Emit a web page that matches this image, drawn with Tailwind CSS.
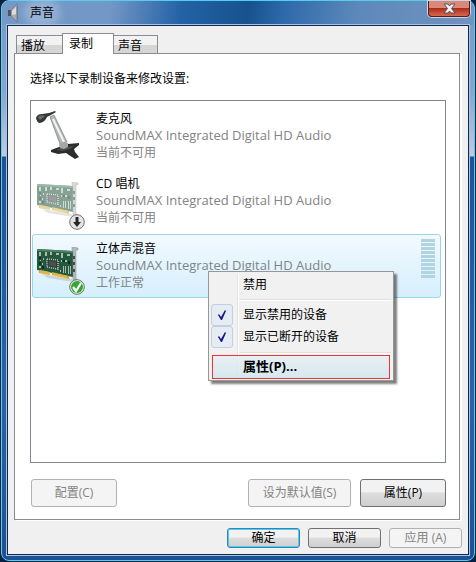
<!DOCTYPE html>
<html lang="zh-CN">
  <head>
    <meta charset="UTF-8" />
    <meta name="viewport" content="width=device-width, initial-scale=1.0" />
    <title>声音</title>
    <script src="https://cdn.jsdelivr.net/npm/@tailwindcss/browser@4"></script>
  </head>
  <body class="h-screen bg-[#06223f] font-['Open_Sans','Noto_Sans_CJK_SC',sans-serif] text-xs text-black">
    <!-- Shared circuit board drawing -->
    <svg class="hidden">
      <symbol id="card" viewBox="0 0 44 38">
        <path d="M6 27 L36 32 L42 31 L37 35 L12 31Z" fill="#ccd3d3" />
        <path d="M1 2 L37 4 V30 L1 23Z" fill="#23573e" />
        <path d="M1 2 L37 4 V6 L1 4Z" fill="#4f8465" />
        <path d="M3 23 L14 25 V28 L3 26Z M16 25 L33 29 V32 L16 28Z" fill="#d6a52c" />
        <path d="M5 23v3M7 23v4M9 24v3M11 24v4M13 25v3M18 26v3M20 26v3M22 27v3M24 27v3M26 28v3M28 28v3M30 29v3" stroke="#f7dc7c" stroke-width=".6" />
        <path d="M11 12 L22 13 V22 L11 20Z" fill="#343d3a" stroke="#b7c7bd" stroke-width="1.500" stroke-dasharray="1 1" />
        <path d="M13 14 L20 15 V20 L13 18Z" fill="#49504e" />
        <g fill="#a9bdb0">
          <path d="M3 5h2v4H3zM9 5h2v4H9zM14 5h2v3h-2zM20 6h3v2h-3zM25 6h2v5h-2zM31 7h3v2h-3zM27 19h1v7h-1zM29 19h1v7h-1zM32 19h1v8h-1zM34 19h1v8h-1z" />
          <path d="M4 13h1v1H4zM6 16h1v2H6zM3 19h2v2H3zM7 11h1v2H7zM25 13h1v2h-1zM29 13h2v2h-2zM24 23h1v2h-1z" />
        </g>
        <path d="M3 10h2v2H3zM3 15h2v3H3zM6 19h2v3H6zM27 13h2v2h-2zM32 14h2v3h-2z" fill="#102d20" />
        <path d="M36 0 L42 1 V3 L40 3 V33 L37 32 V4 L36 3Z" fill="#b5b9bc" stroke="#84898b" stroke-width=".5" />
        <path d="M37 9h2v3h-2zM37 15h2v3h-2zM37 22h2v3h-2z" fill="#424b4d" />
      </symbol>
    </svg>

    <main class="flex h-full flex-col px-px pb-px">
      <div class="flex min-h-0 grow flex-col rounded-lg border border-[#55cdef] bg-[linear-gradient(#7598c6_0,#84a6cf_90px,#bdcce0_155px,#1c549b_156px,#2863a8_400px,#1b5295_100%)] px-[5px] pb-[5px]">
        <!-- Title bar -->
        <header class="-mx-[5px] flex h-6 shrink-0 items-start justify-between rounded-t-lg bg-[linear-gradient(100deg,#7598c6_0%,#7397c6_23%,#2462a6_38%,#17528f_52%,#2f6aab_60%,#5c89ba_75%,#7393bf_100%)] pr-1 pl-1">
          <div class="flex h-6 items-center gap-2">
            <svg class="h-5 w-4" viewBox="0 0 16 20">
              <path d="M2 7h4v6H2z" fill="#4a5560" />
              <path d="M5 7l6-6v18l-6-6z" fill="#a9acae" stroke="#6b747c" stroke-width=".7" />
              <path d="M6 8l4-4v7l-4 1z" fill="#dcdfe1" />
              <path d="M11.500 3v14" stroke="#667d99" />
            </svg>
            <h1 class="rounded-full bg-white/25 shadow-[0_0_8px_6px_#ffffff40]">声音</h1>
          </div>
          <button aria-label="关闭" class="flex h-4 w-[42px] items-center justify-center rounded-b border border-t-0 border-[#531d24] bg-linear-to-b from-[#d9897a] from-45% via-[#ad2b1b] via-50% to-[#d66a4b] shadow-[0_0_0_1px_#c8d7e8]">
            <svg class="h-[11px] w-[13px]" viewBox="0 0 13 11">
              <path d="M1 1h4l1.500 2L8 1h4L8.500 5.500 12 10H8L6.500 8 5 10H1l3.500-4.500z" fill="#f3f3f5" stroke="#545565" />
            </svg>
          </button>
        </header>

        <section class="flex min-h-0 grow flex-col border border-[#10284c] bg-[#f0f0f0] px-1.5 pt-[7px] pb-1.5 shadow-[0_0_0_1px_#a9c5e3]">
          <!-- Tabs -->
          <nav class="relative z-10 -mb-px flex items-end px-0.5">
            <button class="h-[19px] w-[46px] border border-r-0 border-[#898c95] bg-linear-to-b from-[#f2f2f2] from-50% to-[#d6d6d6] to-55% pl-1 text-left leading-[19px]">播放</button>
            <button class="h-[21px] w-[52px] border border-b-0 border-[#898c95] bg-white pl-1.5 text-left leading-[18px]">录制</button>
            <button class="h-[19px] w-11 border border-l-0 border-[#898c95] bg-linear-to-b from-[#f2f2f2] from-50% to-[#d6d6d6] to-55% pl-1 text-left leading-[19px]">声音</button>
          </nav>

          <div class="mr-0.5 flex min-h-0 grow flex-col border border-[#898c95] bg-white pt-4 pr-[13px] pb-3 pl-[15px] shadow-[2px_1px_0_#fff]">
            <p class="mb-3 leading-[18px]">选择以下录制设备来修改设置:</p>

            <ul class="min-h-0 grow border border-[#828790] px-px pt-[3px]">
              <li class="mb-px flex h-16 items-start border border-transparent pt-[5px] pl-[3px]">
                <svg class="mt-px h-[50px] w-12 shrink-0" viewBox="0 0 48 50">
                  <path d="M15 39 L23 36 L32 33 L43 32 L43 34 L38 38 L39 41 L43 46 L39 48 L30 42 L22 43 L15 41Z" fill="#2b2d2e" />
                  <path d="M20 39 L27 36 L38 35 L34 38 L27 40Z" fill="#4b4e4f" />
                  <path d="M14 6 L18 4 L31 31 L24 33Z" fill="#b4b7b8" stroke="#777a7c" stroke-width=".7" />
                  <path d="M17 8 L28 31" stroke="#f4f4f4" stroke-width="2" />
                  <path d="M23 33 L27 31 L32 32 V36 L28 38 L24 37Z" fill="#a4a7a8" />
                  <path d="M0 7 Q1 3 6 3 L13 2 L19 0 L20 1 L15 4 L11 6 Q9 11 4 12 Q1 12 0 7Z" fill="#353738" />
                  <path d="M2 6 Q5 3 9 5 L4 9Z" fill="#696c6e" />
                </svg>
                <div class="ml-3 leading-[17px]">
                  <h2>麦克风</h2>
                  <p class="text-[13px] text-[#838383]">SoundMAX Integrated Digital HD Audio</p>
                  <p class="text-[#838383]">当前不可用</p>
                </div>
              </li>
              <li class="mb-px flex h-16 items-start border border-transparent pt-[5px] pl-[3px]">
                <div class="relative mt-[7px] h-[50px] w-12 shrink-0">
                  <svg class="h-[38px] w-11 opacity-55"><use href="#card" /></svg>
                  <svg class="absolute top-8 left-[33px] h-4 w-4" viewBox="0 0 16 16">
                    <circle cx="8" cy="8" r="7.300" fill="#e3e3e3" stroke="#727272" />
                    <path d="M6.500 3h3v5H12l-4 5-4-5h2.500z" fill="#252525" />
                  </svg>
                </div>
                <div class="ml-3 leading-[17px]">
                  <h2>CD 唱机</h2>
                  <p class="text-[13px] text-[#838383]">SoundMAX Integrated Digital HD Audio</p>
                  <p class="text-[#838383]">当前不可用</p>
                </div>
              </li>
              <li class="relative mr-[3px] flex h-16 items-start rounded-[3px] border border-[#99d8e9] bg-linear-to-b from-[#f2f9fe] to-[#d6effc] pt-[5px] pl-[3px]">
                <div class="relative mt-[7px] h-[50px] w-12 shrink-0">
                  <svg class="h-[38px] w-11"><use href="#card" /></svg>
                  <svg class="absolute top-8 left-[33px] h-4 w-4" viewBox="0 0 16 16">
                    <circle cx="8" cy="8" r="7.300" fill="#e8f6e4" stroke="#66736a" />
                    <circle cx="8" cy="8" r="6" fill="#35a832" />
                    <path d="M4 8l3 4 5-8" fill="none" stroke="#fff" stroke-width="2.200" />
                  </svg>
                </div>
                <div class="ml-3 grow leading-[17px]">
                  <h2>立体声混音</h2>
                  <p class="text-[13px] text-[#7d8587]">SoundMAX Integrated Digital HD Audio</p>
                  <p class="text-[#7d8587]">工作正常</p>
                </div>
                <div class="mr-[5px] -mt-px h-[39px] w-3.5 bg-[repeating-linear-gradient(#b0d4e1_0_3px,transparent_3px_4px)]"></div>

                <!-- Context menu -->
                <div role="menu" class="absolute top-9 left-[175px] z-20 w-[186px] border border-[#979797] bg-[#f1f1f1] p-0.5 shadow-[3px_3px_2px_#00000080]">
                  <div class="bg-[linear-gradient(to_right,transparent_26px,#e2e3e3_26px_27px,#fff_27px_28px,transparent_28px)]">
                    <button role="menuitem" class="block h-[22px] w-full pl-8 text-left">禁用</button>
                    <hr class="mt-[3px] mb-[3px] ml-7 h-0.5 border-t border-b border-t-[#e0e0e0] border-b-white" />
                    <label class="flex h-[22px] items-center">
                      <input type="checkbox" checked class="peer sr-only" />
                      <span class="flex h-[22px] w-[22px] items-center justify-center rounded-[3px] border border-[#c5cde3] bg-[#e6ecf4]">
                        <svg class="h-3 w-3" viewBox="0 0 12 12"><path d="M2 6l1-1 2 3 4-7 1 1-4 9H5z" fill="#17178b" /></svg>
                      </span>
                      <span class="pl-2.5">显示禁用的设备</span>
                    </label>
                    <label class="flex h-[22px] items-center">
                      <input type="checkbox" checked class="peer sr-only" />
                      <span class="flex h-[22px] w-[22px] items-center justify-center rounded-[3px] border border-[#c5cde3] bg-[#e6ecf4]">
                        <svg class="h-3 w-3" viewBox="0 0 12 12"><path d="M2 6l1-1 2 3 4-7 1 1-4 9H5z" fill="#17178b" /></svg>
                      </span>
                      <span class="pl-2.5">显示已断开的设备</span>
                    </label>
                    <hr class="mt-1 mb-px ml-7 h-0.5 border-t border-b border-t-[#e0e0e0] border-b-white" />
                    <button role="menuitem" class="ml-px -mb-px block h-6 w-[178px] border border-[#ed3434] bg-linear-to-b from-[#e8eff3]/80 to-[#cee6ee]/80 pl-[30px] text-left text-[13px] font-bold">属性(P)...</button>
                  </div>
                </div>
              </li>
            </ul>

            <div class="mt-4 flex shrink-0 gap-[9px] pl-px">
              <button disabled class="mr-auto h-7 w-[86px] rounded-[3px] border border-[#adb2b5] bg-[#f4f4f4] text-[#838383]">配置(C)</button>
              <button disabled class="h-7 w-[103px] rounded-[3px] border border-[#adb2b5] bg-[#f4f4f4] text-[#838383]">设为默认值(S)</button>
              <button class="h-7 w-[86px] rounded-[3px] border border-[#707070] bg-linear-to-b from-[#f2f2f2] from-45% via-[#dddddd] via-50% to-[#cfcfcf]">属性(P)</button>
            </div>
          </div>

          <!-- Dialog buttons -->
          <footer class="mt-2 flex h-5 shrink-0 justify-end gap-2">
            <button class="w-[73px] rounded-[3px] border border-[#3c7fb1] bg-linear-to-b from-[#f2f2f2] from-45% via-[#dddddd] via-50% to-[#cfcfcf] leading-[18px] shadow-[inset_0_0_0_1px_#48d1f4]">确定</button>
            <button class="w-[73px] rounded-[3px] border border-[#707070] bg-linear-to-b from-[#f2f2f2] from-45% via-[#dddddd] via-50% to-[#cfcfcf] leading-[18px]">取消</button>
            <button disabled class="w-[73px] rounded-[3px] border border-[#adb2b5] bg-[#f4f4f4] leading-[18px] text-[#838383]">应用 (A)</button>
          </footer>
        </section>
      </div>
    </main>
  </body>
</html>
